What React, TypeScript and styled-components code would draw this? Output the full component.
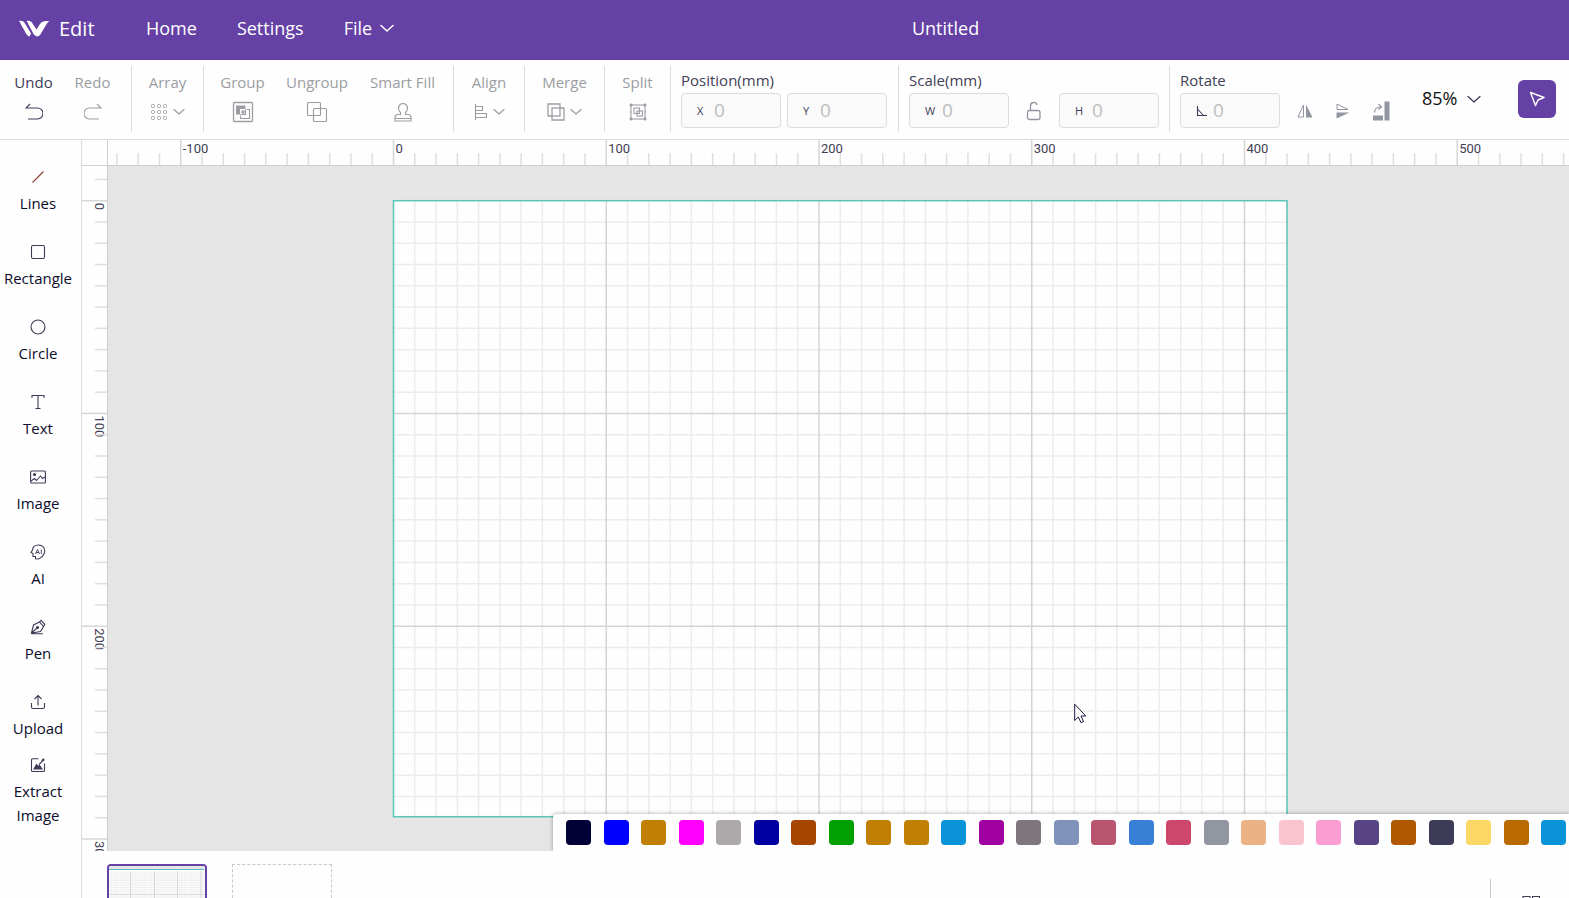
import React, { useEffect, useState } from "react";
import styled, { createGlobalStyle } from "styled-components";

const PURPLE = "#6541a5";
const LINE = "#dcdcdf";
const MUTED = "#9b9da2";
const PX_PER_MM = 2.1275;
const ORIGIN_X = 285.5;
const ORIGIN_Y = 34.7;
const BOARD_W = 893.5;
const BOARD_H = 616;

const GlobalStyle = createGlobalStyle`
  * { box-sizing: border-box; }
  body { margin: 0; background: #fefefe; }
  body, button, input, select {
    font-family: "Open Sans", "Noto Sans", sans-serif;
  }
  button { border: 0; background: none; padding: 0; color: inherit; }
`;

const Page = styled.div`
  height: 100vh;
  display: flex;
  flex-direction: column;
  overflow: hidden;
`;

const Header = styled.header`
  flex: 0 0 60px;
  display: flex;
  align-items: center;
  padding: 0 72px 4px 19px;
  background: ${PURPLE};
  color: #fff;
  font-size: 18px;
`;

const Brand = styled.div`
  display: flex;
  align-items: center;
  gap: 9px;
  width: 127px;
  font-size: 20px;
`;

const Nav = styled.nav`
  display: flex;
  gap: 40px;
`;

const NavLink = styled.a`
  color: inherit;
  text-decoration: none;
`;

const NavButton = styled.button`
  display: flex;
  align-items: center;
  gap: 8px;
  font-size: inherit;
`;

const DocTitle = styled.h1`
  flex: 1;
  margin: 0;
  font-size: 18px;
  font-weight: 400;
  text-align: center;
`;

const Toolbar = styled.div`
  flex: 0 0 80px;
  display: flex;
  align-items: center;
  padding-bottom: 1px;
  border-bottom: 1px solid ${LINE};
`;

const Group = styled.div<{ $width: number; $pad?: string; $last?: boolean }>`
  flex: 0 0 ${(p) => p.$width}px;
  height: 66px;
  display: flex;
  padding: ${(p) => p.$pad ?? "0"};
  border-right: ${(p) => (p.$last ? "0" : `1px solid ${LINE}`)};
`;

const Tool = styled.button<{ $active?: boolean; $width?: number }>`
  flex: ${(p) => (p.$width ? `0 0 ${p.$width}px` : "1")};
  display: flex;
  flex-direction: column;
  align-items: center;
  gap: 8px;
  padding-top: 6px;
  font-size: 15px;
  line-height: 20px;
  white-space: nowrap;
  color: ${(p) => (p.$active ? "#3c3c58" : MUTED)};
`;

const ToolIcon = styled.span`
  display: flex;
  align-items: center;
  gap: 5px;
  height: 24px;
`;

const FieldSet = styled.div`
  display: flex;
  flex-direction: column;
  gap: 2px;
  padding-top: 4px;
`;

const FieldTitle = styled.div`
  font-size: 15px;
  line-height: 21px;
  color: #3f4054;
`;

const FieldRow = styled.div<{ $gap: number }>`
  display: flex;
  align-items: center;
  gap: ${(p) => p.$gap}px;
`;

const Field = styled.label`
  display: flex;
  align-items: center;
  width: 100px;
  height: 35px;
  padding-left: 15px;
  border: 1px solid ${LINE};
  border-radius: 4px;
  background: #fafafa;
`;

const FieldMark = styled.span`
  width: 17px;
  display: flex;
  font-size: 11px;
  color: #3c3c58;
`;

const FieldInput = styled.input`
  width: 60px;
  padding: 0 0 2px;
  border: 0;
  outline: 0;
  background: none;
  font-size: 19px;
  &::placeholder { color: #bcbebf; opacity: 1; }
`;

const IconButton = styled.button`
  display: flex;
  align-items: center;
  justify-content: center;
  width: 20px;
  height: 22px;
  color: #9296a0;
`;

const FlipButtons = styled.div`
  display: flex;
  gap: 18px;
`;

const ToolbarEnd = styled.div`
  display: flex;
  align-items: center;
  gap: 37px;
  margin-left: auto;
  padding-right: 13px;
`;

const Zoom = styled.label`
  display: flex;
  align-items: center;
  gap: 8px;
  color: #3c3c58;
`;

const ZoomSelect = styled.select`
  appearance: none;
  width: 37px;
  padding: 0 0 2px;
  border: 0;
  outline: 0;
  background: none;
  font-size: 18px;
  color: #111;
`;

const PointerButton = styled.button`
  display: flex;
  align-items: center;
  justify-content: center;
  width: 38px;
  height: 38px;
  border-radius: 6px;
  background: ${PURPLE};
  color: #fff;
`;

const Body = styled.div`
  flex: 1;
  min-height: 0;
  display: flex;
`;

const Sidebar = styled.nav`
  flex: 0 0 82px;
  display: flex;
  flex-direction: column;
  padding: 14px 5px 0 0;
  border-right: 1px solid ${LINE};
`;

const SideItem = styled.button`
  flex: 0 0 75px;
  display: flex;
  flex-direction: column;
  align-items: center;
  justify-content: center;
  gap: 6px;
  font-size: 15px;
  line-height: 24px;
  color: #0c0c2c;
  svg { color: #3c3c58; }
`;

const Main = styled.main`
  flex: 1;
  min-width: 0;
  display: flex;
  flex-direction: column;
`;

const Stage = styled.div`
  flex: 1;
  min-height: 0;
  position: relative;
  display: grid;
  grid-template: 26px 1fr / 26px 1fr;
  overflow: hidden;
`;

const Corner = styled.div`
  border-right: 1px solid #d0d0d0;
  border-bottom: 1px solid #d0d0d0;
`;

const RulerTop = styled.div`
  min-width: 0;
  border-bottom: 1px solid #cfcfcf;
`;

const RulerLeft = styled.div`
  min-height: 0;
  border-right: 1px solid #cfcfcf;
`;

const Workspace = styled.div`
  min-width: 0;
  min-height: 0;
  overflow: hidden;
  background: #e5e5e5;
`;

const Drawing = styled.svg`
  display: block;
  width: 100%;
  height: 100%;
  overflow: visible;
  font-family: Roboto, "Liberation Sans", sans-serif;
  font-size: 13px;
  fill: #3f3f55;
`;

const Palette = styled.div`
  position: absolute;
  right: 0;
  bottom: 0;
  display: flex;
  align-items: center;
  justify-content: space-between;
  width: 1016px;
  height: 37px;
  padding: 0 3px 0 13px;
  border-top-left-radius: 4px;
  background: #fefefe;
  box-shadow: 0 0 4px rgba(0, 0, 0, 0.35);
`;

const Swatch = styled.button<{ $color: string }>`
  width: 25px;
  height: 25px;
  border-radius: 4px;
  background: ${(p) => p.$color};
`;

const Pointer = styled.svg`
  position: absolute;
  left: 992px;
  top: 563px;
`;

const Pages = styled.footer`
  flex: 0 0 47px;
  display: flex;
  align-items: flex-start;
  gap: 25px;
  padding: 13px 28px 0 25px;
  overflow: hidden;
`;

const PageThumb = styled.button<{ $selected?: boolean }>`
  flex: 0 0 100px;
  height: 70px;
  overflow: hidden;
  border: ${(p) => (p.$selected ? `2px solid ${PURPLE}` : "1px dashed #c8c8c8")};
  border-radius: ${(p) => (p.$selected ? "4px" : "0")};
  background: #fefefe;
  svg { display: block; }
`;

const PagesEnd = styled.div`
  height: 60px;
  margin: 15px 0 0 auto;
  padding: 15px 0 0 30px;
  border-left: 1px solid #c8c8c8;
`;

const Svg = ({ w = 20, h = w, label, children }: { w?: number; h?: number; label?: string; children: React.ReactNode }) => (
  <svg width={w} height={h} viewBox={`0 0 ${w} ${h}`} fill="none" stroke="currentColor" strokeWidth="1.1"
    aria-hidden={label ? undefined : true} aria-label={label}>
    {children}
  </svg>
);

const Chevron = ({ w = 12, weight = 1.2 }: { w?: number; weight?: number }) => (
  <svg width={w} height={w / 2 + 2} viewBox={`0 0 ${w} ${w / 2 + 2}`} fill="none" stroke="currentColor" strokeWidth={weight} aria-hidden>
    <path d={`M1 1.5 L${w / 2} ${w / 2} L${w - 1} 1.5`} strokeLinecap="round" strokeLinejoin="round" />
  </svg>
);

const arrayIcon = (
  <Svg w={18}>
    {[3, 9, 15].flatMap((y) => [3, 9, 15].map((x) => <rect key={`${x}-${y}`} x={x - 1.5} y={y - 1.5} width="3" height="3" rx="1" strokeWidth="1" />))}
  </Svg>
);

const icons = {
  undo: <Svg w={18}><path d="M5 1 L1 5 H12.5 a5.3 5.3 0 0 1 0 11 H3" /></Svg>,
  redo: <Svg w={18}><path d="M13 1 L17 5 H5.5 a5.3 5.3 0 0 0 0 11 H15" /></Svg>,
  group: (
    <Svg w={22}>
      <rect x="1.500" y="1.500" width="19" height="19" rx="1" strokeWidth="1.300" />
      <path d="M4 4.500H13.500V8H8V13.500H4z" fill="currentColor" stroke="none" />
      <path d="M9.500 9.500H12.500V12.500H9.500z" fill="currentColor" stroke="none" />
      <path d="M14.500 8.500H17.500V17.500H8.500V14.500M8.500 13.500H13.500V8.500" />
    </Svg>
  ),
  ungroup: (
    <Svg w={22}>
      <rect x="1.500" y="1.500" width="13" height="13" rx="1" />
      <rect x="7.500" y="7.500" width="13" height="13" rx="1" />
    </Svg>
  ),
  fill: (
    <Svg w={20}>
      <path d="M7.500 12.500 V10.500 C3.500 6.500 6 1.500 10 1.500 S16.500 6.500 12.500 10.500 V12.500 H15 a3 3 0 0 1 3 3 V16.500 H2 V15.500 a3 3 0 0 1 3-3z" />
      <path d="M2 16.500V19H18V16.500" />
    </Svg>
  ),
  align: (
    <Svg w={14} h={18}>
      <path d="M1.500 1V17" />
      <path d="M1.500 3.500H8.500V7.500H1.500M1.500 10.500H12.500V14.500H1.500" />
    </Svg>
  ),
  merge: (
    <Svg w={18}>
      <path d="M1 1H13V5H17V17H5V13H1z" strokeWidth="1.300" />
      <rect x="5" y="5" width="8" height="8" strokeWidth="1.300" />
    </Svg>
  ),
  split: (
    <Svg w={18}>
      <rect x="2" y="2" width="14" height="14" />
      <rect x="5" y="5" width="5.500" height="5.500" />
      <rect x="8" y="8" width="5.500" height="5" />
      <path d="M0.500 2h3M14.500 2h3M0.500 16h3M14.500 16h3M2 0.500v3M16 0.500v3M2 14.500v3M16 14.500v3M2 9h-1M17 9h-1" strokeWidth="1.500" />
    </Svg>
  ),
};

const sideTools: { label: string; icon: React.ReactNode }[] = [
  { label: "Lines", icon: <Svg w={16}><path d="M2.500 13.500 L13.500 2.500" stroke="#8a3c30" /></Svg> },
  { label: "Rectangle", icon: <Svg w={16}><rect x="1.500" y="1.500" width="13" height="13" rx="1.500" /></Svg> },
  { label: "Circle", icon: <Svg w={16}><circle cx="8" cy="8" r="7" /></Svg> },
  { label: "Text", icon: <Svg w={16}><path d="M2 4V1.500H14V4M8 1.500V14.500M5.500 14.500H10.500" /></Svg> },
  {
    label: "Image",
    icon: (
      <Svg w={16}>
        <rect x="0.600" y="2" width="14.800" height="12" rx="1" />
        <circle cx="4.500" cy="5.500" r="1" fill="currentColor" />
        <path d="M1 12 L4.500 9.500 L6.500 11.500 L10.500 7 L12.500 9.500 L15 8" />
      </Svg>
    ),
  },
  {
    label: "AI",
    icon: (
      <Svg w={16}>
        <path d="M5.500 14.800 V12.500 H3 V9.500 L1 8.500 L2.500 6 C2.500 3 5 1 8.500 1 C12 1 14.800 3.500 14.800 7 C14.800 10 12.800 11 12.500 12.500 L8.500 15z" />
        <path d="M5.500 10 L7.500 5.500 L9.500 10 M6.200 8.500 H8.800 M11.300 5.500 V10" strokeWidth="0.900" />
      </Svg>
    ),
  },
  {
    label: "Pen",
    icon: (
      <Svg w={16}>
        <path d="M1.500 14 L3.500 6 L9.500 3 L13.500 7.500 L10.500 12.500 Z M1.500 14 L7 9 M1.500 14.700H13" />
        <path d="M9.500 3 L11 1.300 L14.800 5.300 L13.500 7.500" />
        <circle cx="7.500" cy="8.500" r="1" fill="currentColor" />
      </Svg>
    ),
  },
  { label: "Upload", icon: <Svg w={16}><path d="M8 11.500V2M4.500 5 L8 1.500 L11.500 5M1.500 9V13a1.500 1.500 0 0 0 1.500 1.500H13a1.500 1.500 0 0 0 1.500-1.500V9" /></Svg> },
  {
    label: "Extract Image",
    icon: (
      <Svg w={16}>
        <path d="M8.500 1.800H2.500a1 1 0 0 0-1 1V13.500a1 1 0 0 0 1 1H13.500a1 1 0 0 0 1-1V6.500" />
        <path d="M4 12 L6.500 7.500 L8 9.500 L9.500 8.500 L12 12z" fill="currentColor" />
        <path d="M9 7.500 L12 4.500" strokeWidth="1.200" />
        <path d="M12 4.300 L14 2" strokeWidth="2.200" />
      </Svg>
    ),
  },
];

const swatches = [
  "#010138", "#0000ff", "#c17f03", "#ff00ff", "#ada9aa", "#0000a0", "#a64500", "#00a000", "#c17f03",
  "#c17f03", "#0b93d9", "#a000a0", "#7e757d", "#7e92ba", "#b9566f", "#3880d6", "#cd466b", "#9196a0",
  "#ebb285", "#f9c4ce", "#fb9dd3", "#584484", "#b05800", "#3c3c58", "#fdd766", "#b86a00", "#0b93d9",
];

const range = (from: number, to: number) => Array.from({ length: Math.max(0, to - from + 1) }, (_, i) => from + i);

function useWindowSize() {
  const [size, setSize] = useState({ width: window.innerWidth, height: window.innerHeight });
  useEffect(() => {
    const update = () => setSize({ width: window.innerWidth, height: window.innerHeight });
    window.addEventListener("resize", update);
    return () => window.removeEventListener("resize", update);
  }, []);
  return size;
}

function Ruler({ vertical }: { vertical?: boolean }) {
  const { width, height } = useWindowSize();
  const origin = vertical ? ORIGIN_Y : ORIGIN_X;
  const step = 10 * PX_PER_MM;
  const length = vertical ? height - 213 : width - 108;
  const first = Math.ceil(-origin / step);
  const last = Math.floor((length - origin) / step);
  return (
    <Drawing aria-hidden>
      {range(first, last).map((n) => {
        const at = origin + n * step;
        const major = n % 10 === 0;
        const start = major ? 0 : 13;
        return (
          <g key={n}>
            <path
              d={vertical ? `M${start} ${at}H25` : `M${at} ${start}V25`}
              stroke={major ? "#d6d6d6" : "#dfdfdf"}
              strokeWidth="1.5"
            />
            {major && (vertical
              ? <text transform={`translate(13 ${at + 2}) rotate(90)`}>{n * 10}</text>
              : <text x={at + 2} y="13">{n * 10}</text>)}
          </g>
        );
      })}
    </Drawing>
  );
}

function Board() {
  const step = 10 * PX_PER_MM;
  const line = (n: number) => (n % 10 === 0 ? "#d4d4d4" : "#ececec");
  return (
    <Drawing role="img" aria-label="Artboard">
      <g transform={`translate(${ORIGIN_X} ${ORIGIN_Y})`}>
        <rect width={BOARD_W} height={BOARD_H} fill="#fefefe" />
        {[false, true].map((major) => (
          <g key={String(major)} strokeWidth="1.5">
            {range(1, 41).filter((n) => (n % 10 === 0) === major).map((n) => <path key={`v${n}`} d={`M${n * step} 0V${BOARD_H}`} stroke={line(n)} />)}
            {range(1, 28).filter((n) => (n % 10 === 0) === major).map((n) => <path key={`h${n}`} d={`M0 ${n * step}H${BOARD_W}`} stroke={line(n)} />)}
          </g>
        ))}
        <rect width={BOARD_W} height={BOARD_H} fill="none" stroke="#58c5b7" strokeWidth="1.500" />
      </g>
    </Drawing>
  );
}

function ThumbDrawing() {
  return (
    <svg width="96" height="66" viewBox="0 0 96 66" aria-hidden>
      <rect width="96" height="4" fill="#e5e5e5" />
      {range(1, 40).map((n) => <path key={`v${n}`} d={`M${n * 2.36} 5V66`} stroke="#efefef" strokeWidth="0.7" />)}
      {range(1, 26).map((n) => <path key={`h${n}`} d={`M0 ${5 + n * 2.36}H96`} stroke="#ececec" strokeWidth="0.7" />)}
      {[21.5, 45.5, 68.5, 92].map((x) => <path key={x} d={`M${x} 5V66`} stroke="#d6d6d6" />)}
      <path d="M0 28.500H96" stroke="#dadada" />
      <path d="M0 3.500H95" stroke="#62b9c4" />
    </svg>
  );
}

function NumberField({ mark, name }: { mark: React.ReactNode; name: string }) {
  return (
    <Field>
      <FieldMark>{mark}</FieldMark>
      <FieldInput aria-label={name} placeholder="0" />
    </Field>
  );
}

export default function App() {
  return (
    <Page>
      <GlobalStyle />
      <Header>
        <Brand>
          <svg width="31" height="17" viewBox="0 0 31 17" fill="#fff" aria-hidden>
            <path d="M0 1 C2.500 0.500 4.500 1 6 3.500 L12 13.500 L10.500 16.500 C8.500 16 7.500 14.500 6.500 12.500 L2 4.500 C1.500 3.200 1 2 0 1z" />
            <path d="M7.500 1 C10.500 0.500 12.500 1.500 13.500 3.500 L17.500 9.500 L21 4 C22.500 1.500 25 0.500 30.500 1 C29 2 28 3.500 27 5 L22 13.500 C20.500 16 18.500 17 17 16 C15.500 15.500 14.500 14 13.500 12 L9.500 4.500 C9 3 8.500 2 7.500 1z" />
          </svg>
          Edit
        </Brand>
        <Nav>
          <NavLink href="#home">Home</NavLink>
          <NavLink href="#settings">Settings</NavLink>
          <NavButton>File <Chevron w={14} weight={1.6} /></NavButton>
        </Nav>
        <DocTitle>Untitled</DocTitle>
      </Header>

      <Toolbar>
        <Group $width={132} $pad="0 9px 0 4px">
          <Tool $active>Undo<ToolIcon>{icons.undo}</ToolIcon></Tool>
          <Tool>Redo<ToolIcon>{icons.redo}</ToolIcon></Tool>
        </Group>
        <Group $width={72}>
          <Tool>Array<ToolIcon>{arrayIcon}<Chevron /></ToolIcon></Tool>
        </Group>
        <Group $width={250}>
          <Tool $width={77}>Group<ToolIcon>{icons.group}</ToolIcon></Tool>
          <Tool $width={72}>Ungroup<ToolIcon>{icons.ungroup}</ToolIcon></Tool>
          <Tool $width={99}>Smart Fill<ToolIcon>{icons.fill}</ToolIcon></Tool>
        </Group>
        <Group $width={71}>
          <Tool>Align<ToolIcon>{icons.align}<Chevron /></ToolIcon></Tool>
        </Group>
        <Group $width={80}>
          <Tool>Merge<ToolIcon>{icons.merge}<Chevron /></ToolIcon></Tool>
        </Group>
        <Group $width={66}>
          <Tool>Split<ToolIcon>{icons.split}</ToolIcon></Tool>
        </Group>
        <Group $width={228} $pad="0 10px">
          <FieldSet>
            <FieldTitle>Position(mm)</FieldTitle>
            <FieldRow $gap={6}>
              <NumberField mark="X" name="Position X" />
              <NumberField mark="Y" name="Position Y" />
            </FieldRow>
          </FieldSet>
        </Group>
        <Group $width={270} $pad="0 10px">
          <FieldSet>
            <FieldTitle>Scale(mm)</FieldTitle>
            <FieldRow $gap={15}>
              <NumberField mark="W" name="Width" />
              <IconButton aria-label="Lock aspect ratio">
                <Svg w={16} h={20}>
                  <rect x="1.500" y="9.500" width="12.500" height="9" rx="2" strokeWidth="1.300" />
                  <path d="M4.500 9.500V5a3.300 3.300 0 0 1 6.500-1" strokeWidth="1.300" />
                </Svg>
              </IconButton>
              <NumberField mark="H" name="Height" />
            </FieldRow>
          </FieldSet>
        </Group>
        <Group $width={232} $pad="0 0 0 10px" $last>
          <FieldSet>
            <FieldTitle>Rotate</FieldTitle>
            <FieldRow $gap={15}>
              <NumberField
                name="Rotation"
                mark={<Svg w={12}><path d="M1.500 1V10.500H11M1.500 4L7.500 10.500" /></Svg>}
              />
              <FlipButtons>
                <IconButton aria-label="Flip horizontally">
                  <Svg w={16}>
                    <path d="M6.500 2V14H1z" strokeWidth="1" />
                    <path d="M9 1.500V14.500H15.500z" fill="currentColor" stroke="none" />
                  </Svg>
                </IconButton>
                <IconButton aria-label="Flip vertically">
                  <Svg w={16}>
                    <path d="M2 1V6.500H13z" strokeWidth="1" />
                    <path d="M1.500 9.500H14.500L1.500 15.500z" fill="currentColor" stroke="none" />
                  </Svg>
                </IconButton>
                <IconButton aria-label="Rotate by a quarter turn">
                  <Svg w={18} h={20}>
                    <path d="M1 14.500H11V19.500H1zM12.500 0.500H17.500V19.500H12.500z" fill="currentColor" stroke="none" />
                    <path d="M2.500 11.500C2.500 7.500 4.500 6 9 6M6.500 3L9.500 6L6.500 8.500" />
                  </Svg>
                </IconButton>
              </FlipButtons>
            </FieldRow>
          </FieldSet>
        </Group>
        <ToolbarEnd>
          <Zoom>
            <ZoomSelect aria-label="Zoom" defaultValue="85">
              <option value="50">50%</option>
              <option value="85">85%</option>
              <option value="100">100%</option>
            </ZoomSelect>
            <Chevron w={14} weight={1.3} />
          </Zoom>
          <PointerButton aria-label="Select">
            <Svg w={18}><path d="M2.500 2.500 L16 7.500 L10 10 L7.500 15.500z" strokeWidth="1.400" strokeLinejoin="round" /></Svg>
          </PointerButton>
        </ToolbarEnd>
      </Toolbar>

      <Body>
        <Sidebar>
          {sideTools.map((tool) => (
            <SideItem key={tool.label}>{tool.icon}{tool.label}</SideItem>
          ))}
        </Sidebar>
        <Main>
          <Stage>
            <Corner />
            <RulerTop><Ruler /></RulerTop>
            <RulerLeft><Ruler vertical /></RulerLeft>
            <Workspace><Board /></Workspace>
            <Pointer width="13" height="21" viewBox="0 0 13 21" fill="#fff" stroke="#1c1840" aria-hidden>
              <path d="M0.700 1.200V17.500L4.300 14L7 19.700L9.500 18.500L7 13H11.800z" />
            </Pointer>
            <Palette>
              {swatches.map((color, i) => <Swatch key={i} $color={color} aria-label={`Colour ${color}`} />)}
            </Palette>
          </Stage>
          <Pages>
            <PageThumb $selected aria-label="Page 1"><ThumbDrawing /></PageThumb>
            <PageThumb aria-label="Add page" />
            <PagesEnd>
              <IconButton aria-label="All pages">
                <Svg w={20}>
                  <path d="M2 1.500H9V8.500H2zM11.500 1.500H18.500V8.500H11.500zM2 11.500H9V18.500H2zM11.500 11.500H18.500V18.500H11.500z" stroke="#3c3c58" />
                </Svg>
              </IconButton>
            </PagesEnd>
          </Pages>
        </Main>
      </Body>
    </Page>
  );
}
